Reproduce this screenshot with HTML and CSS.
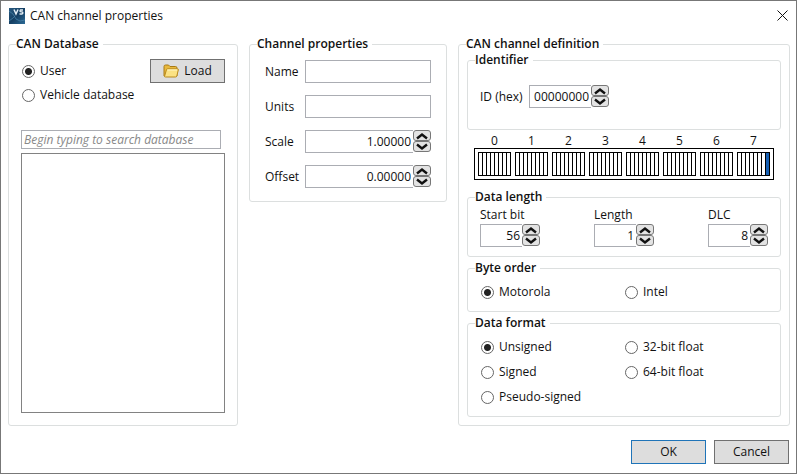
FILE: index.html
```html
<!DOCTYPE html>
<html lang="en">
<head>
<meta charset="utf-8">
<title>CAN channel properties</title>
<link rel="stylesheet" href="styles.css">
</head>
<body>
<svg class="symbols" aria-hidden="true">
  <symbol id="up" viewBox="0 0 12 8"><path d="M1 6.500 6 2.500 11 6.500" fill="none" stroke="#111" stroke-width="2.400"/></symbol>
  <symbol id="down" viewBox="0 0 12 8"><path d="M1 1.500 6 5.500 11 1.500" fill="none" stroke="#111" stroke-width="2.400"/></symbol>
</svg>
<form class="dialog">
  <header class="titlebar">
    <svg class="app-icon" viewBox="0 0 16 16" aria-hidden="true">
      <defs><linearGradient id="sky" x1="0" y1="0" x2="1" y2="1"><stop offset="0" stop-color="#285a80"/><stop offset=".5" stop-color="#153f63"/><stop offset="1" stop-color="#2c6b96"/></linearGradient></defs>
      <rect width="16" height="16" fill="url(#sky)"/>
      <path d="M0 3 4 6 7 11 11 13 16 12M0 13 4 10 6 8" fill="none" stroke="#4c86ad" stroke-width="1" opacity=".7"/>
      <path d="M5 1.500 7 6 9 1.500" fill="none" stroke="#e4eef5" stroke-width="1.500"/>
      <path d="M14 2H11.500Q10.500 3 11.500 3.700L13.500 4Q14.500 5 13 6H10.500" fill="none" stroke="#e4eef5" stroke-width="1.300"/>
    </svg>
    <h1 class="title">CAN channel properties</h1>
    <button class="close" type="button" aria-label="Close"><svg viewBox="0 0 11 11"><path d="M.5.5l10 10M10.500.5l-10 10" stroke="#111" fill="none"/></svg></button>
  </header>

  <main class="panels">
    <fieldset class="group database">
      <legend>CAN Database</legend>
      <div class="source">
        <div class="source-options">
          <label class="radio"><input type="radio" name="source" checked>User</label>
          <label class="radio"><input type="radio" name="source">Vehicle database</label>
        </div>
        <button class="button" type="button">
          <svg class="folder" viewBox="0 0 16 14" aria-hidden="true">
            <path d="M1 12V2.500Q1 1 2.500 1H5.500L7 2.500H12.500Q14 2.500 14 4V12Z" fill="#e9b93c" stroke="#a87a16"/>
            <path d="M1.500 12.500 3.500 5.500Q3.800 4.800 4.500 4.800H14.500Q15.600 4.800 15.300 6L13.800 12Q13.600 13 12.500 13H2.500Q1.500 13 1.500 12.500Z" fill="#fbe284" stroke="#b98a1e"/>
            <path d="M4.500 6H14" stroke="#fff6c8" fill="none"/>
          </svg>Load</button>
      </div>
      <div class="search"><input class="field" type="text" aria-label="Search database" placeholder="Begin typing to search database"></div>
      <div class="results" role="listbox" aria-label="Database channels"></div>
    </fieldset>

    <fieldset class="group properties">
      <legend>Channel properties</legend>
      <div class="form-grid">
        <label for="name">Name</label>
        <input class="field" id="name" type="text">
        <label for="units">Units</label>
        <input class="field" id="units" type="text">
        <label for="scale">Scale</label>
        <div class="spinner"><input class="field" id="scale" type="text" value="1.00000"><span class="steps"><button type="button" aria-label="Increase scale"><svg><use href="#up"/></svg></button><button type="button" aria-label="Decrease scale"><svg><use href="#down"/></svg></button></span></div>
        <label for="offset">Offset</label>
        <div class="spinner"><input class="field" id="offset" type="text" value="0.00000"><span class="steps"><button type="button" aria-label="Increase offset"><svg><use href="#up"/></svg></button><button type="button" aria-label="Decrease offset"><svg><use href="#down"/></svg></button></span></div>
      </div>
    </fieldset>

    <fieldset class="group definition">
      <legend>CAN channel definition</legend>

      <fieldset class="group identifier">
        <legend>Identifier</legend>
        <div class="id-row">
          <label for="ident">ID (hex)</label>
          <div class="spinner"><input class="field" id="ident" type="text" value="00000000"><span class="steps"><button type="button" aria-label="Increase ID"><svg><use href="#up"/></svg></button><button type="button" aria-label="Decrease ID"><svg><use href="#down"/></svg></button></span></div>
        </div>
      </fieldset>

      <div class="bitmap">
        <div class="byte-labels"><span>0</span><span>1</span><span>2</span><span>3</span><span>4</span><span>5</span><span>6</span><span>7</span></div>
        <div class="bytes">
          <div class="byte"><i></i><i></i><i></i><i></i><i></i><i></i><i></i><i></i></div>
          <div class="byte"><i></i><i></i><i></i><i></i><i></i><i></i><i></i><i></i></div>
          <div class="byte"><i></i><i></i><i></i><i></i><i></i><i></i><i></i><i></i></div>
          <div class="byte"><i></i><i></i><i></i><i></i><i></i><i></i><i></i><i></i></div>
          <div class="byte"><i></i><i></i><i></i><i></i><i></i><i></i><i></i><i></i></div>
          <div class="byte"><i></i><i></i><i></i><i></i><i></i><i></i><i></i><i></i></div>
          <div class="byte"><i></i><i></i><i></i><i></i><i></i><i></i><i></i><i></i></div>
          <div class="byte"><i></i><i></i><i></i><i></i><i></i><i></i><i></i><i class="used"></i></div>
        </div>
      </div>

      <fieldset class="group">
        <legend>Data length</legend>
        <div class="lengths">
          <div class="length"><label for="start">Start bit</label>
            <div class="spinner"><input class="field" id="start" type="text" value="56"><span class="steps"><button type="button" aria-label="Increase start bit"><svg><use href="#up"/></svg></button><button type="button" aria-label="Decrease start bit"><svg><use href="#down"/></svg></button></span></div></div>
          <div class="length"><label for="len">Length</label>
            <div class="spinner"><input class="field" id="len" type="text" value="1"><span class="steps"><button type="button" aria-label="Increase length"><svg><use href="#up"/></svg></button><button type="button" aria-label="Decrease length"><svg><use href="#down"/></svg></button></span></div></div>
          <div class="length"><label for="dlc">DLC</label>
            <div class="spinner"><input class="field" id="dlc" type="text" value="8"><span class="steps"><button type="button" aria-label="Increase DLC"><svg><use href="#up"/></svg></button><button type="button" aria-label="Decrease DLC"><svg><use href="#down"/></svg></button></span></div></div>
        </div>
      </fieldset>

      <fieldset class="group">
        <legend>Byte order</legend>
        <div class="choices">
          <label class="radio"><input type="radio" name="order" checked>Motorola</label>
          <label class="radio"><input type="radio" name="order">Intel</label>
        </div>
      </fieldset>

      <fieldset class="group">
        <legend>Data format</legend>
        <div class="choices">
          <label class="radio"><input type="radio" name="format" checked>Unsigned</label>
          <label class="radio"><input type="radio" name="format">32-bit float</label>
          <label class="radio"><input type="radio" name="format">Signed</label>
          <label class="radio"><input type="radio" name="format">64-bit float</label>
          <label class="radio"><input type="radio" name="format">Pseudo-signed</label>
        </div>
      </fieldset>
    </fieldset>
  </main>

  <footer class="actions">
    <button class="button primary" type="button">OK</button>
    <button class="button" type="button">Cancel</button>
  </footer>
</form>
</body>
</html>
```
FILE: styles.css
```css
* { box-sizing: border-box; }

body {
  margin: 0;
  background: #fff;
  color: #111;
  font: 12px/16px "Open Sans", "Noto Sans", sans-serif;
}

button, input { font: inherit; color: inherit; }

.symbols { display: none; }

.dialog {
  display: flex;
  flex-direction: column;
  min-height: 100vh;
  border: 1px solid #777;
}

.titlebar {
  display: flex;
  align-items: center;
  height: 35px;
  padding: 0 8px 6px;
  flex: none;
}
.app-icon { width: 16px; height: 16px; }
.title {
  flex: 1;
  margin: 0 0 0 5px;
  font-size: 12px;
  font-weight: 400;
}
.close {
  display: flex;
  padding: 0;
  border: 0;
  background: none;
}
.close svg { width: 11px; height: 11px; }

.panels {
  display: grid;
  grid-template-columns: 230fr 198fr 332fr;
  gap: 11px;
  padding: 0 6px 0 7px;
}

.group {
  min-width: 0;
  margin: 0;
  padding: 0 12px;
  border: 1px solid #dcdfdf;
  border-radius: 3px;
}
.group > legend {
  margin-left: -5px;
  padding: 0 4px 0 0;
  font-weight: 600;
}

.database {
  display: flex;
  flex-direction: column;
  padding: 7px 12px 12px;
}
.source {
  display: flex;
  justify-content: space-between;
  align-items: flex-start;
  margin-bottom: 23px;
}
.search { display: flex; padding: 0 4px 4px 0; }
.search .field { height: 19px; }
.search .field::placeholder { color: #888; font-style: italic; opacity: 1; }
.results { flex: 1; border: 1px solid #828282; }

.radio {
  display: flex;
  align-items: center;
  gap: 5px;
  height: 24px;
  padding-left: 1px;
}
.radio input {
  appearance: none;
  width: 13px;
  height: 13px;
  margin: 0;
  border: 1px solid #666;
  border-radius: 50%;
  background: #fff;
}
.radio input:checked { background: radial-gradient(circle, #222 3px, #fff 4px); }

.button {
  display: flex;
  align-items: center;
  justify-content: center;
  gap: 5px;
  width: 75px;
  height: 24px;
  padding: 0;
  border: 1px solid #707070;
  background: #ddd;
}
.button.primary { border-color: #1f74b8; }
.folder { width: 16px; height: 14px; }

.field {
  min-width: 0;
  width: 100%;
  height: 23px;
  padding: 0 2px;
  border: 1px solid #abadb3;
  border-radius: 0;
  background: #fff;
}

.properties {
  align-self: start;
  padding: 8px 15px 13px;
}
.properties > legend { margin-left: -8px; }
.form-grid {
  display: grid;
  grid-template-columns: 32px 1fr;
  gap: 12px 8px;
  align-items: center;
}

.spinner { display: flex; }
.spinner .field { flex: 1; border-right: 0; text-align: right; }
.steps { display: flex; flex-direction: column; flex: none; width: 18px; }
.steps button {
  display: flex;
  align-items: center;
  justify-content: center;
  height: 11px;
  padding: 0;
  border: 1px solid #777;
  border-radius: 3px;
  background: #e3e3e3;
}
.steps svg { width: 12px; height: 8px; }

.definition { padding: 0 8px 8px; }
.definition > legend { margin-left: -1px; }
.identifier { padding: 17px 12px 21px; }
.id-row { display: grid; grid-template-columns: 49px 80px; align-items: center; }

.bitmap { margin: 4px 7px 9px; }
.byte-labels, .bytes { display: grid; grid-template-columns: repeat(8, 1fr); gap: 4px; }
.byte-labels { padding: 0 4px; line-height: 14px; text-align: center; }
.bytes { height: 32px; padding: 3px; border: 1px solid #000; }
.byte { display: flex; border: solid #000; border-width: 1px 0 1px 1px; }
.byte i { flex: 1; border-right: 1px solid #000; }
.byte .used { background: #155fb4; }

.lengths {
  display: grid;
  grid-template-columns: repeat(3, 60px);
  justify-content: space-between;
  padding: 2px 0 9px;
}
.length { display: grid; gap: 1px; }

.group + .group { margin-top: 3px; }
.panels > .group + .group { margin-top: 0; }
.choices {
  display: grid;
  grid-template-columns: 1fr 1fr;
  row-gap: 1px;
  padding: 4px 0 7px;
}

.actions {
  display: flex;
  justify-content: flex-end;
  gap: 8px;
  padding: 14px 7px 8px;
}
```
